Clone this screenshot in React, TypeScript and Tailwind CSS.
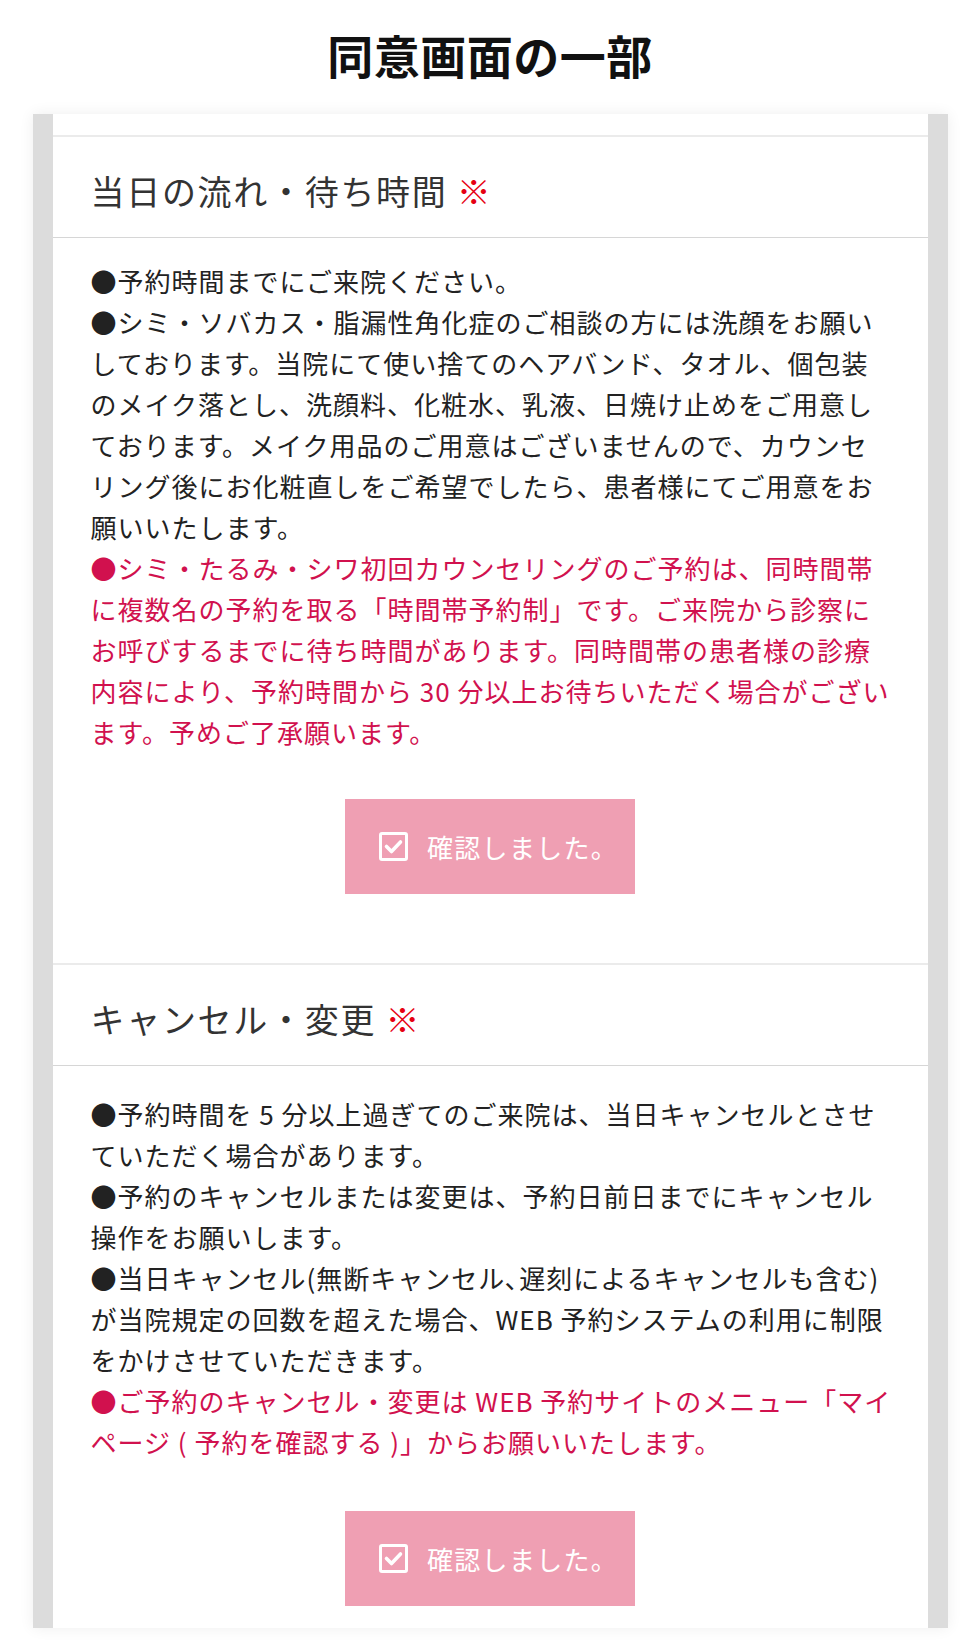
import React from 'react';

type Line = { text: string; emphasis?: boolean };

interface ConsentSectionProps {
  title: string;
  lines: Line[];
  bodyTop?: string;
  buttonGap?: string;
}

// チェック付きの四角アイコン（確認ボタン用）
const CheckSquareIcon: React.FC = () => (
  <svg width="29" height="29" viewBox="0 0 29 29" fill="none" aria-hidden="true">
    <rect x="1.5" y="1.5" width="26" height="26" rx="1.5" stroke="#ffffff" strokeWidth="3" />
    <path
      d="M7.5 14.5l5 5 9-9.5"
      stroke="#ffffff"
      strokeWidth="3.6"
      strokeLinecap="round"
      strokeLinejoin="round"
    />
  </svg>
);

const ConfirmButton: React.FC = () => (
  <button
    type="button"
    className="flex h-[95px] w-[290px] items-center gap-[19px] bg-[#ef9fb3] pl-[34px] text-white"
  >
    <CheckSquareIcon />
    <span className="text-[26px] leading-none tracking-[1.3px]">確認しました。</span>
  </button>
);

const ConsentSection: React.FC<ConsentSectionProps> = ({
  title,
  lines,
  bodyTop = 'pt-[22px]',
  buttonGap = 'mt-[47px]',
}) => (
  <section className="border-t-2 border-[#ebebeb]">
    <h2 className="border-b border-[#d6d6d6] pb-[21px] pl-[38px] pt-[28px] text-[34px] font-normal leading-[51px] tracking-[1.7px] text-[#333333]">
      {title} <span className="text-[#e60012]">※</span>
    </h2>
    <div className={`pb-[69px] pl-[38px] pr-[35px] ${bodyTop}`}>
      <div className="text-[26px] leading-[41px] tracking-[1px]">
        {lines.map((line, i) => (
          <p key={i} className={line.emphasis ? 'text-[#d1114e]' : 'text-[#222222]'}>
            {line.text}
          </p>
        ))}
      </div>
      <div className={`flex justify-center pr-[3px] ${buttonGap}`}>
        <ConfirmButton />
      </div>
    </div>
  </section>
);

const flowLines: Line[] = [
  { text: '●予約時間までにご来院ください。' },
  {
    text:
      '●シミ・ソバカス・脂漏性角化症のご相談の方には洗顔をお願いしております。当院にて使い捨てのヘアバンド、タオル、個包装のメイク落とし、洗顔料、化粧水、乳液、日焼け止めをご用意しております。メイク用品のご用意はございませんので、カウンセリング後にお化粧直しをご希望でしたら、患者様にてご用意をお願いいたします。',
  },
  {
    text:
      '●シミ・たるみ・シワ初回カウンセリングのご予約は、同時間帯に複数名の予約を取る「時間帯予約制」です。ご来院から診察にお呼びするまでに待ち時間があります。同時間帯の患者様の診療内容により、予約時間から 30 分以上お待ちいただく場合がございます。予めご了承願います。',
    emphasis: true,
  },
];

const cancelLines: Line[] = [
  { text: '●予約時間を 5 分以上過ぎてのご来院は、当日キャンセルとさせていただく場合があります。' },
  { text: '●予約のキャンセルまたは変更は、予約日前日までにキャンセル操作をお願いします。' },
  {
    text:
      '●当日キャンセル(無断キャンセル､遅刻によるキャンセルも含む)が当院規定の回数を超えた場合、WEB 予約システムの利用に制限をかけさせていただきます。',
  },
  {
    text: '●ご予約のキャンセル・変更は WEB 予約サイトのメニュー「マイページ ( 予約を確認する )」からお願いいたします。',
    emphasis: true,
  },
];

export default function App() {
  return (
    <div
      className="min-h-[1644px] bg-white pt-[20px]"
      style={{ fontFamily: '"Noto Sans CJK JP", "Noto Sans", sans-serif' }}
    >
      <h1 className="text-center text-[46px] font-bold leading-[69px] tracking-[0.5px] text-[#111111]">
        同意画面の一部
      </h1>

      <div className="mx-auto mt-[25px] h-[1514px] w-[915px] overflow-hidden bg-[#dcdcdc] px-5 shadow-[0_0_14px_rgba(0,0,0,0.07)]">
        <div className="h-full bg-white pt-[21px]">
          <ConsentSection title="当日の流れ・待ち時間" lines={flowLines} />
          <ConsentSection
            title="キャンセル・変更"
            lines={cancelLines}
            bodyTop="pt-[27px]"
            buttonGap="mt-[49px]"
          />
        </div>
      </div>
    </div>
  );
}
